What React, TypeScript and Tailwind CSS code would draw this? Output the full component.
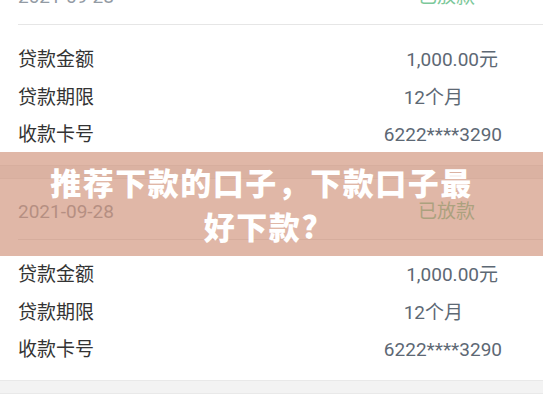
import React from "react";

const font = { fontFamily: 'Roboto, "Noto Sans CJK SC", "Noto Sans", sans-serif' };

function Card() {
  const rows: { label: string; value: string; pr: string }[] = [
    { label: "贷款金额", value: "1,000.00元", pr: "pr-[45px]" },
    { label: "贷款期限", value: "12个月", pr: "pr-[80px]" },
    { label: "收款卡号", value: "6222****3290", pr: "pr-[41px]" },
  ];
  return (
    <div>
      <div className="h-[14px] bg-[#f3f3f3] border-y border-[#e9e9e9]" />
      <div className="h-[60px] pt-[22px] pl-[18px] flex justify-between text-[19px] leading-[22px]">
        <span className="text-[#939ba4]">2021-09-28</span>
        <span className="text-[#7cc89a] pr-[68px]">已放款</span>
      </div>
      <div className="ml-[18px] h-px bg-[#e6e6e6]" />
      <div className="pt-[16px] pb-[11.5px] pl-[18px]">
        {rows.map((r) => (
          <div key={r.label} className="flex justify-between text-[19px] leading-[37.5px]">
            <span className="text-[#333333]">{r.label}</span>
            <span className={`text-[#5d6874] ${r.pr}`}>{r.value}</span>
          </div>
        ))}
      </div>
    </div>
  );
}

export default function App() {
  return (
    <div className="relative w-[543px] h-[408px] overflow-hidden bg-white" style={font}>
      <div className="-mt-[50px]">
        <Card />
        <Card />
        <div className="h-[14px] bg-[#f3f3f3] border-y border-[#e9e9e9]" />
        <div className="h-[100px] bg-white" />
      </div>
      <div className="absolute left-0 right-0 top-[152px] h-[104px] bg-[rgba(203,135,108,0.6)] flex items-center justify-center pr-[20px]">
        <div
          className="text-white font-black text-[31px] leading-[44px] tracking-[1.5px] text-center"
          style={{ fontFamily: '"Noto Sans CJK SC", "Noto Sans", sans-serif' }}
        >
          推荐下款的口子，下款口子最
          <br />
          好下款?
        </div>
      </div>
    </div>
  );
}
